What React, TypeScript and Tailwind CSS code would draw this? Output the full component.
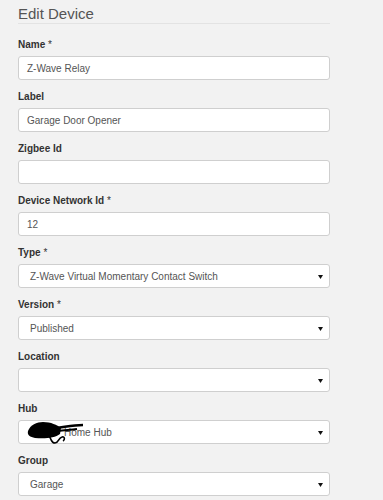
import type { ReactNode } from 'react'

type Field = {
  label: string
  required?: boolean
  value?: string
  select?: boolean
}

const fields: Field[] = [
  { label: 'Name', required: true, value: 'Z-Wave Relay' },
  { label: 'Label', value: 'Garage Door Opener' },
  { label: 'Zigbee Id', value: '' },
  { label: 'Device Network Id', required: true, value: '12' },
  { label: 'Type', required: true, value: 'Z-Wave Virtual Momentary Contact Switch', select: true },
  { label: 'Version', required: true, value: 'Published', select: true },
  { label: 'Location', value: '', select: true },
]

function Caret() {
  return (
    <svg width="5" height="4" viewBox="0 0 5 4" className="absolute right-[6px] top-[10px]">
      <path d="M0 0H5L2.5 4Z" fill="#111" />
    </svg>
  )
}

// marker scribble hiding the hub owner's name
function Scribble() {
  return (
    <svg
      width="60"
      height="24"
      viewBox="0 0 60 24"
      className="pointer-events-none absolute left-[8px] top-[1px]"
    >
      <path
        d="M1 9C3 3 10 0 16 0C24 0 30 3 34 6L33 12C28 16 18 17 8 16C3 15 0 13 1 9Z"
        fill="#000"
      />
      <path d="M29 6C38 5 46 3 56 3" stroke="#000" strokeWidth="2.5" fill="none" />
      <path d="M31 9C38 8 44 8 50 7" stroke="#000" strokeWidth="2" fill="none" />
      <path
        d="M22 14C25 18 24 21 28 21C32 21 31 16 35 15C38 14 38 18 36 19"
        stroke="#000"
        strokeWidth="1.6"
        fill="none"
      />
    </svg>
  )
}

function Box({ select, children }: { select?: boolean; children?: ReactNode }) {
  return (
    <div
      className={`relative flex h-[24px] items-center rounded-[3px] border border-[#cfcfcf] bg-white text-[10px] text-[#555] ${
        select ? 'pl-[11px]' : 'pl-[8px]'
      }`}
    >
      {children}
      {select && <Caret />}
    </div>
  )
}

function FormField({ label, required, children }: { label: string; required?: boolean; children: ReactNode }) {
  return (
    <div className="mb-[11px]">
      <div className="mb-[5px] text-[10px] font-bold leading-[12px] text-[#333]">
        {label}
        {required && <span className="font-normal"> *</span>}
      </div>
      {children}
    </div>
  )
}

export default function App() {
  return (
    <div className="h-[500px] w-[383px] overflow-hidden bg-[#f2f2f2] font-['Liberation_Sans',Arial,sans-serif]">
      <div className="w-[330px] pl-[18px] pt-[6px]">
        <div className="mb-[15px] border-b border-[#e3e3e3] pb-[1px] text-[15px] leading-[16px] text-[#555]">
          Edit Device
        </div>

        {fields.map((f) => (
          <FormField key={f.label} label={f.label} required={f.required}>
            <Box select={f.select}>{f.value}</Box>
          </FormField>
        ))}

        <FormField label="Hub">
          <Box select>
            <span className="pl-[34px]">Home Hub</span>
            <Scribble />
          </Box>
        </FormField>

        <FormField label="Group">
          <Box select>Garage</Box>
        </FormField>
      </div>
    </div>
  )
}
